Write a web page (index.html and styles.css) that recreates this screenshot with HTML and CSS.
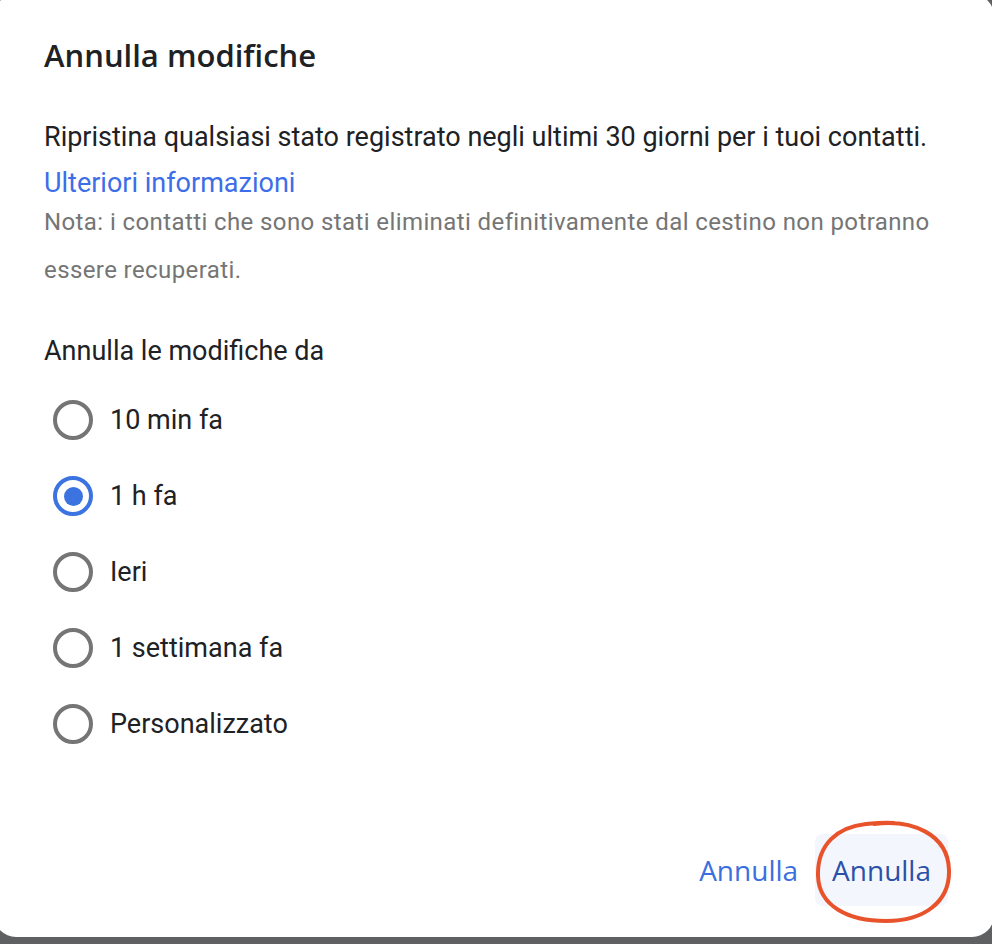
FILE: index.html
```html
<!DOCTYPE html>
<html lang="it">
<head>
  <meta charset="UTF-8" />
  <meta name="viewport" content="width=device-width, initial-scale=1.0" />
  <title>Annulla modifiche</title>
  <link rel="stylesheet" href="styles.css">
</head>
<body>

  <!-- Dialog -->
  <div class="dialog">
    <h1 class="dialogTitle">Annulla modifiche</h1>

    <p class="desc">Ripristina qualsiasi stato registrato negli ultimi 30 giorni per i tuoi contatti.</p>
    <a href="#" class="moreLink">Ulteriori informazioni</a>
    <p class="note">Nota: i contatti che sono stati eliminati definitivamente dal cestino non potranno essere recuperati.</p>

    <p class="groupLabel">Annulla le modifiche da</p>

    <div class="radioList">
      <label class="radioRow"><span class="radio"></span>10 min fa</label>
      <label class="radioRow"><span class="radio checked"></span>1 h fa</label>
      <label class="radioRow"><span class="radio"></span>Ieri</label>
      <label class="radioRow"><span class="radio"></span>1 settimana fa</label>
      <label class="radioRow"><span class="radio"></span>Personalizzato</label>
    </div>

    <div class="actions">
      <button class="textBtn">Annulla</button>
      <button class="textBtn hovered">Annulla
        <!-- cerchio a mano -->
        <svg class="scribble" width="140" height="108" viewBox="0 0 140 108">
          <path d="M60 6 C 98 1, 134 16, 135 52 C 136 84, 110 103, 72 103 C 34 103, 5 88, 4 58 C 3 26, 24 9, 52 6 C 62 5, 70 4, 80 5"
                fill="none" stroke="#e8532b" stroke-width="4" stroke-linecap="round" />
        </svg>
      </button>
    </div>
  </div>

</body>
</html>
```

FILE: styles.css
```css
body {
  margin: 0;
  overflow: hidden;
  background: #5f6062;
  font-family: Roboto, "Liberation Sans", sans-serif;
  color: #202124;
}

.dialog {
  width: 1000px;
  height: 943px;
  margin: -6px 0 0 -6px;
  padding: 41px 0 0 50px;
  box-sizing: border-box;
  background: #fff;
  border-radius: 22px;
}

.dialogTitle {
  margin: 0;
  font-family: "Open Sans", Roboto, sans-serif;
  font-weight: 600;
  font-size: 31px;
  line-height: 40px;
  color: #202124;
}

.desc {
  margin: 39px 0 0;
  font-size: 27px;
  line-height: 46px;
}

.moreLink {
  display: block;
  margin-top: 8px;
  font-size: 27px;
  line-height: 30px;
  color: #3d6ee8;
  text-decoration: none;
}

.note {
  margin: 0;
  width: 900px;
  font-size: 24px;
  line-height: 48px;
  letter-spacing: 0.4px;
  color: #757575;
}

.groupLabel {
  margin: 37px 0 0;
  font-size: 27px;
  line-height: 40px;
}

.radioList {
  margin-top: 11px;
  display: flex;
  flex-direction: column;
}

.radioRow {
  height: 76px;
  display: flex;
  align-items: center;
  gap: 17px;
  font-size: 27px;
  padding-left: 9px;
}

.radio {
  width: 40px;
  height: 40px;
  box-sizing: border-box;
  border: 4px solid #757575;
  border-radius: 50%;
  display: flex;
  align-items: center;
  justify-content: center;
}

.radio.checked {
  border-color: #3b73e0;
}

.radio.checked::after {
  content: "";
  width: 19px;
  height: 19px;
  border-radius: 50%;
  background: #3b73e0;
}

.actions {
  margin-top: 72px;
  padding-right: 46px;
  display: flex;
  justify-content: flex-end;
}

.textBtn {
  position: relative;
  height: 72px;
  padding: 0 17px;
  border: none;
  border-radius: 8px;
  background: none;
  font-family: "Open Sans", Roboto, sans-serif;
  font-weight: 500;
  font-size: 28px;
  color: #3b6fe0;
}

.textBtn.hovered {
  background: #f4f6fd;
  color: #2b50a8;
}

.scribble {
  position: absolute;
  left: -1px;
  top: -16px;
}
```
